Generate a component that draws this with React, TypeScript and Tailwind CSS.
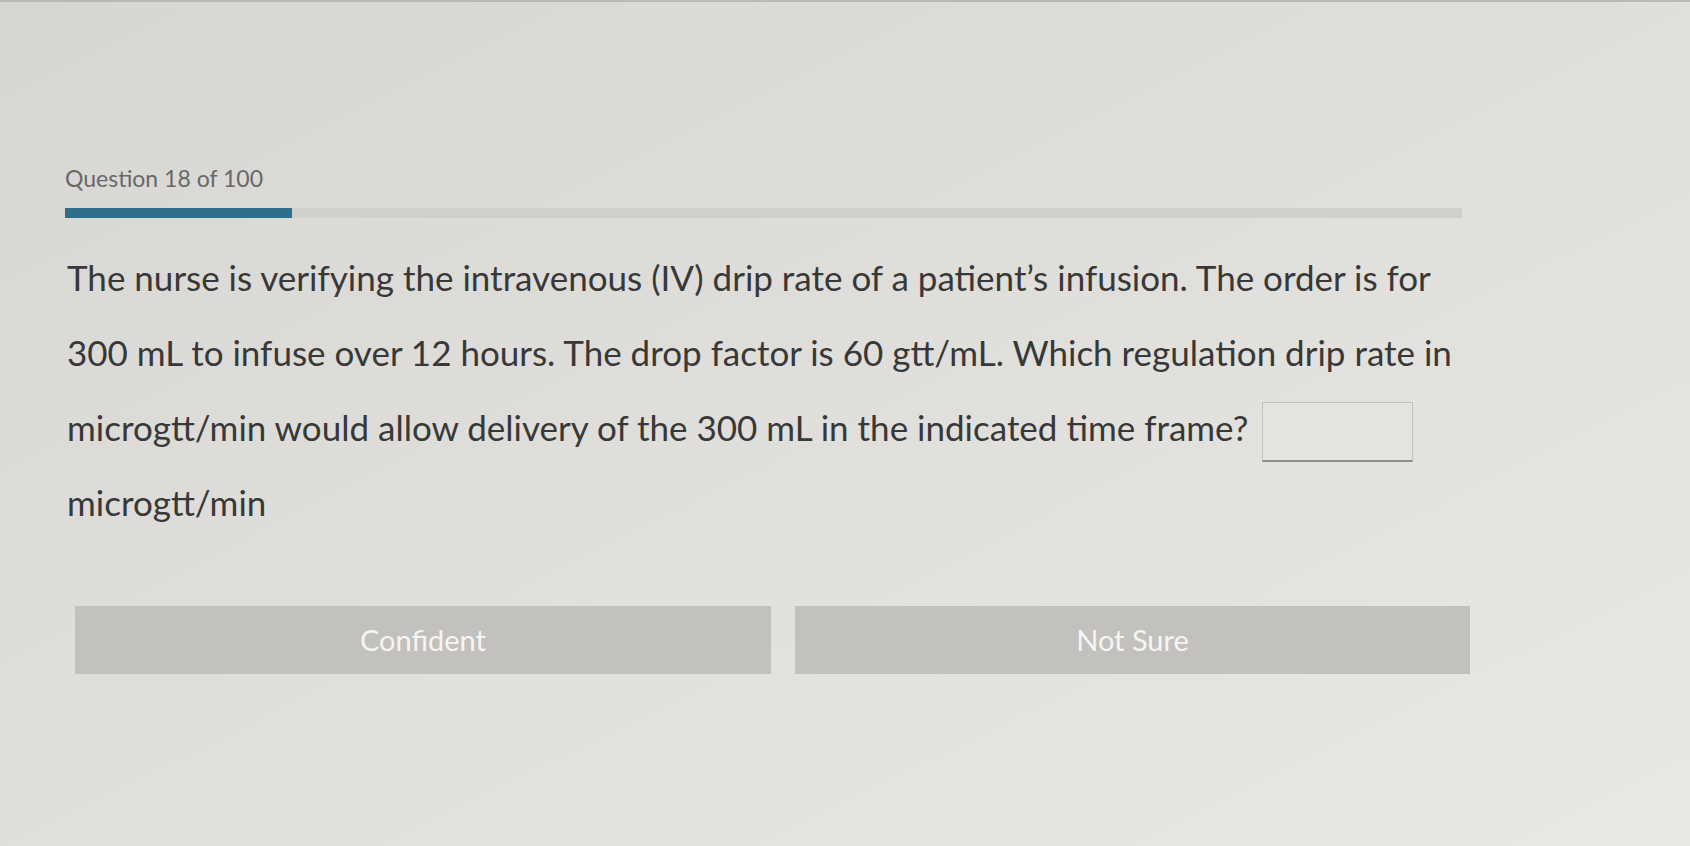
export default function App() {
  return (
    <div
      className="h-[846px] w-[1690px] overflow-hidden border-t-2 border-[#b9b8b5] bg-gradient-to-br from-[#d8d6d2] via-[#e0dfdb] to-[#e9e8e5] text-[#383838]"
      style={{ fontFamily: "Lato, 'Open Sans', sans-serif" }}
    >
      <div className="pl-[65px] pt-[160px]">
        <p className="text-[23px] leading-[32px] text-[#686868]">Question 18 of 100</p>

        <div className="mt-[14px] flex h-[10px] w-[1397px] bg-[#d1cfcb]">
          <div className="h-full w-[227px] bg-[#2e6f8c]" />
        </div>

        <div className="mt-[22px] whitespace-nowrap pl-[2px] text-[35px] leading-[75px]">
          The nurse is verifying the intravenous (IV) drip rate of a patient’s infusion. The order is for
          <br />
          300 mL to infuse over 12 hours. The drop factor is 60 gtt/mL. Which regulation drip rate in
          <br />
          microgtt/min would allow delivery of the 300 mL in the indicated time frame?
          <input
            type="text"
            aria-label="answer"
            className="ml-[14px] inline-block h-[60px] w-[151px] border border-[#c2c1be] border-b-2 border-b-[#8e8d8a] bg-[#e4e3e0] align-middle outline-none"
          />
          <br />
          microgtt/min
        </div>

        <div className="mt-[66px] flex gap-[24px] pl-[10px]">
          <button className="h-[68px] w-[696px] shrink-0 bg-[#c3c1bd] text-[29px] text-[#f6f5f3]">
            Confident
          </button>
          <button className="h-[68px] w-[675px] shrink-0 bg-[#c3c1bd] text-[29px] text-[#f6f5f3]">
            Not Sure
          </button>
        </div>
      </div>
    </div>
  );
}
